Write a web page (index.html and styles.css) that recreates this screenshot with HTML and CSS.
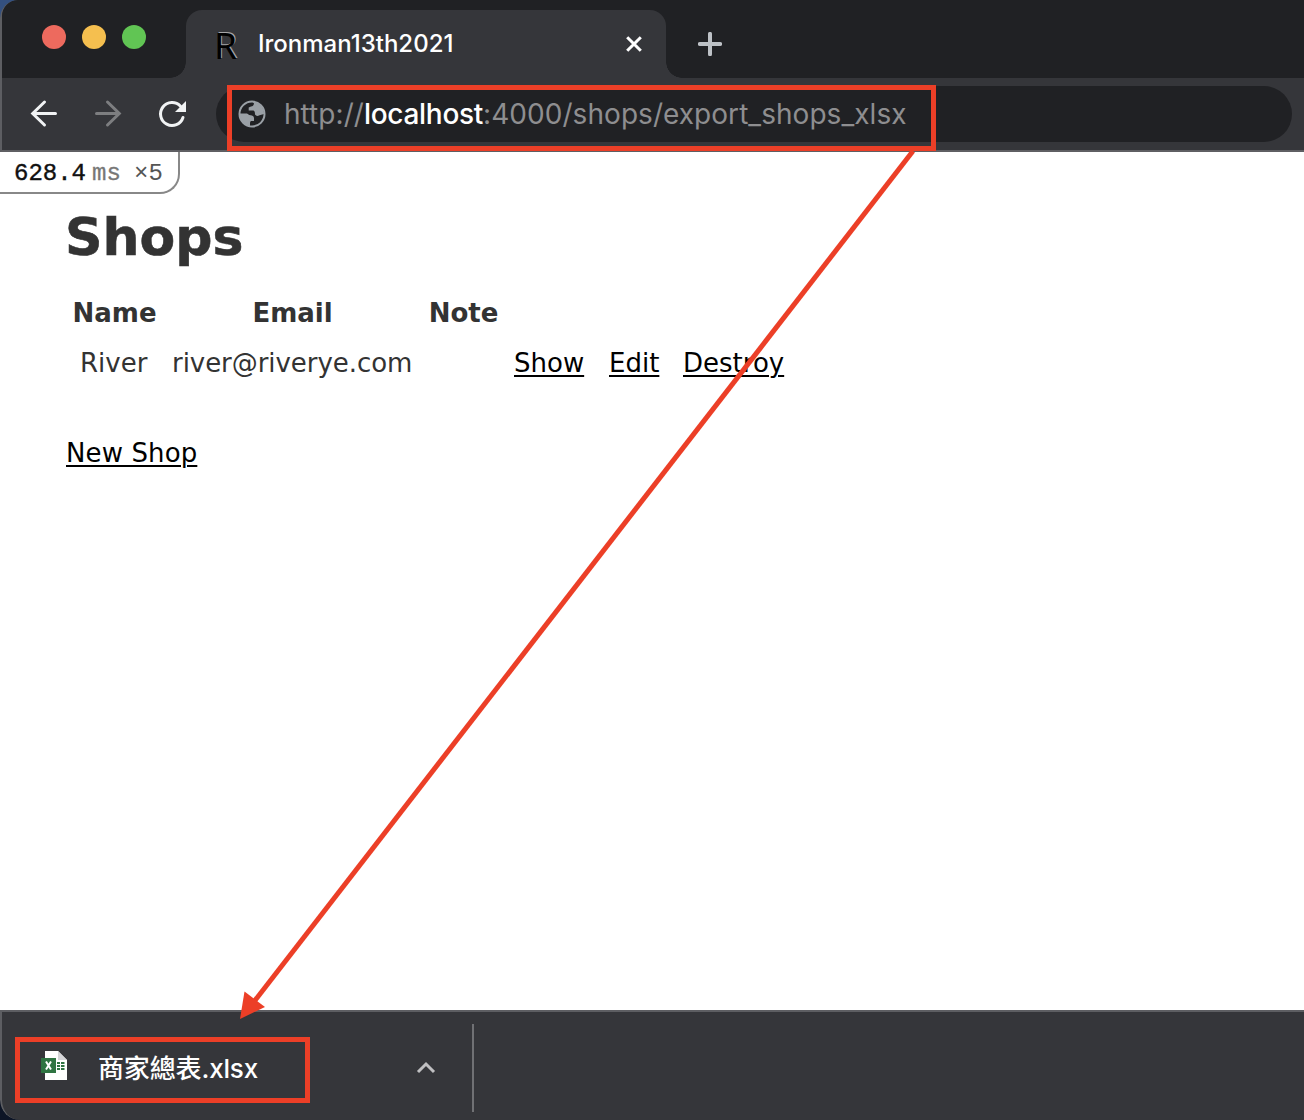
FILE: index.html
```html
<!DOCTYPE html>
<html lang="zh-Hant">
<head>
<meta charset="utf-8">
<title>Ironman13th2021</title>
<link rel="stylesheet" href="styles.css">
</head>
<body>
<div class="window">
  <header class="chrome">
    <div class="tabstrip">
      <div class="lights"><i class="light red"></i><i class="light yellow"></i><i class="light green"></i></div>
      <div class="tab">
        <span class="favicon">R</span>
        <span class="tab-title">Ironman13th2021</span>
        <svg class="close" width="20" height="20" viewBox="0 0 20 20"><path d="M3.2 3.2 16.8 16.8M16.8 3.2 3.2 16.8"/></svg>
      </div>
      <svg class="plus" width="24" height="24" viewBox="0 0 24 24"><path d="M12 1.8V22.2M1.8 12H22.2"/></svg>
    </div>
    <div class="toolbar">
      <svg class="nav" width="32" height="32" viewBox="0 0 32 32"><path d="M27.500 15.500H5M16.500 4 4.700 15.500 16.500 27"/></svg>
      <svg class="nav dim" width="32" height="32" viewBox="0 0 32 32"><path d="M4.500 15.500H27M15.500 4 27.300 15.500 15.500 27"/></svg>
      <svg class="nav reload" width="32" height="32" viewBox="0 0 32 32"><path d="M27 19.500A11.500 11.500 0 1 1 24.500 8.200"/><path class="head" d="M30 3V14H19z"/></svg>
      <div class="omnibox">
        <svg class="globe" width="28" height="28" viewBox="0 0 28 28"><circle cx="14" cy="14" r="12.500"/><path class="land" d="M14.500 1.500 16 3.500Q15.500 6.500 13 6.500L10.700 7.500V10.500H15.500Q17 11 17 14.500Q18.500 17 21.500 15.300L26 14A12.500 12.500 0 0 0 14.500 1.500zM1.500 13.500H9Q11 15.500 14 15.500 16.200 16 16 18.500V21H13Q12 21.500 12 23V26.300A12.500 12.500 0 0 1 1.500 13.500z"/></svg>
        <span class="url">http://<b>localhost</b>:4000/shops/export_shops_xlsx</span>
      </div>
    </div>
  </header>
  <main class="page">
    <div class="profiler"><span class="num">628.4</span><span class="unit">ms</span><span class="count">×5</span></div>
    <h1>Shops</h1>
    <table>
      <colgroup><col class="c1"><col class="c2"><col class="c3"><col class="c4"><col class="c5"><col class="c6"></colgroup>
      <thead><tr><th>Name</th><th>Email</th><th class="note">Note</th><th colspan="3"></th></tr></thead>
      <tbody><tr><td>River</td><td class="mail">river@riverye.com</td><td></td><td><a href="#">Show</a></td><td><a href="#">Edit</a></td><td><a href="#">Destroy</a></td></tr></tbody>
    </table>
    <a class="new" href="#">New Shop</a>
  </main>
  <footer class="shelf">
    <div class="download">
      <svg class="xls" width="28" height="32" viewBox="0 0 28 32">
        <path fill="#fff" d="M4 1H17L26 10V30H4z"/><path fill="#d5d6d8" d="M17 1V10H26z"/>
        <path fill="#2f7442" d="M16 12h3v2h-3zM20 12h3.500v2H20zM16 15h3v2h-3zM20 15h3.500v2H20zM16 18h3v2h-3zM20 18h3.500v2H20zM0 8H15V23H0z"/>
        <path class="x" d="M5 11.500 10 19.500M10 11.500 5 19.500"/>
      </svg>
      <span class="filename">商家總表.xlsx</span>
    </div>
    <svg class="chevron" width="20" height="14" viewBox="0 0 20 14"><path d="M2 12 10 4 18 12"/></svg>
    <div class="divider"></div>
  </footer>
</div>
<div class="mark mark-url"></div>
<div class="mark mark-file"></div>
<svg class="arrow" width="1304" height="1120" viewBox="0 0 1304 1120"><path class="shaft" d="M913 151 253 1003"/><path class="tip" d="M240 1019 244.500 991.500 265 1007z"/></svg>
</body>
</html>
```
FILE: styles.css
```css
* { box-sizing: border-box; }
body { margin: 0; width: 1304px; height: 1120px; overflow: hidden; position: relative; background: linear-gradient(#34507f 0, #34507f 40px, #0d1526 60px); }
svg { display: block; fill: none; stroke-linecap: butt; flex: none; }
.window { display: flex; flex-direction: column; height: 1120px; border-radius: 18px 0 0 20px; overflow: hidden; font-family: Inter, "Noto Sans CJK TC", sans-serif; }
.chrome { flex: none; height: 152px; background: #35363a; border-left: 2px solid #5d5e62; border-bottom: 2px solid #5f5f63; border-top-left-radius: 18px; }
.tabstrip { height: 78px; background: #202124; display: flex; align-items: flex-start; border-top-left-radius: 16px; }
.lights { display: flex; gap: 16px; padding: 25px 0 0 40px; width: 184px; }
.light { width: 24px; height: 24px; border-radius: 50%; }
.red { background: #ed6a5e; }
.yellow { background: #f5bf4f; }
.green { background: #61c554; }
.tab { position: relative; margin-top: 10px; width: 480px; height: 68px; background: #35363a; border-radius: 16px 16px 0 0; display: flex; align-items: center; padding-left: 28px; }
.tab::before, .tab::after { content: ""; position: absolute; bottom: 0; width: 16px; height: 16px; }
.tab::before { left: -16px; background: radial-gradient(circle at 0 0, #202124 15.500px, #35363a 16px); }
.tab::after { right: -16px; background: radial-gradient(circle at 100% 0, #202124 15.500px, #35363a 16px); }
.favicon { width: 44px; font: 37px/40px "Noto Sans", sans-serif; color: #000; text-shadow: 1px -1px 0 #a5a5a7; padding-top: 2px; }
.tab-title { width: 366px; font-size: 24px; font-weight: 450; color: #fff; line-height: 30px; }
.close path { stroke: #fff; stroke-width: 3; }
.plus { margin: 32px 0 0 32px; }
.plus path { stroke: #bdc1c6; stroke-width: 4; stroke-linecap: round; }
.toolbar { height: 72px; display: flex; align-items: center; padding-left: 26px; }
.nav { margin-right: 32px; stroke: #f1f3f4; stroke-width: 3; stroke-linecap: round; }
.dim { stroke: #7d7e80; }
.reload { margin-right: 28px; }
.head { fill: #f1f3f4; stroke: none; }
.omnibox { width: 1076px; height: 56px; border-radius: 28px; background: #202124; display: flex; align-items: center; padding-left: 22px; }
.globe circle { stroke: #9aa0a6; stroke-width: 2; }
.land { fill: #9aa0a6; }
.url { margin-left: 18px; font-size: 28px; letter-spacing: 0.045px; color: #8e8e90; white-space: nowrap; }
.url b { font-weight: 450; letter-spacing: -0.28px; color: #fff; }
.page { flex: 1; background: #fff; color: #333; font: 26px/36px "DejaVu Sans", sans-serif; }
.profiler { width: 180px; height: 42px; border: solid #888; border-width: 0 2px 2px 0; border-bottom-right-radius: 20px; font: 24px/43px "Liberation Mono", monospace; padding-left: 14px; display: flex; white-space: nowrap; }
.num { color: #111; width: 78px; -webkit-text-stroke: 0.4px #111; }
.unit { color: #777; width: 42px; -webkit-text-stroke: 0.3px #777; }
.count { color: #555; }
h1 { margin: 8px 0 0 65px; font-size: 52px; line-height: 70px; -webkit-text-stroke: 0.6px #333; }
table { table-layout: fixed; width: 733px; margin: 23px 0 0 66px; border-spacing: 4px 0; border-collapse: separate; white-space: nowrap; }
.c1 { width: 89px; } .c2 { width: 259px; } .c3 { width: 74px; } .c4 { width: 91px; } .c5 { width: 70px; }
th { padding: 0 0 10px; text-align: center; }
.note { padding-left: 1px; }
td { padding: 4px 0 0 10px; }
.mail { padding-left: 9px; letter-spacing: -0.05px; }
a { color: #000; text-decoration: underline; text-decoration-thickness: 2px; text-underline-offset: 3px; }
.new { display: inline-block; margin: 54px 0 0 66px; letter-spacing: 0.12px; }
.shelf { flex: none; height: 110px; background: #35363a; border-top: 2px solid #5d5e62; border-left: 2px solid #5d5e62; border-bottom-left-radius: 20px; display: flex; }
.download { width: 414px; padding: 38px 0 0 39px; display: flex; }
.x { stroke: #fff; stroke-width: 2; }
.filename { margin-left: 29px; font-size: 26px; font-weight: 450; letter-spacing: -0.15px; line-height: 38px; color: #fff; white-space: nowrap; }
.chevron { margin-top: 48px; }
.chevron path { stroke: #c0c0c2; stroke-width: 3; }
.divider { margin: 12px 0 0 36px; width: 2px; height: 88px; background: #707174; }
.mark { position: absolute; border: 5px solid #ec3f27; }
.mark-url { left: 227px; top: 85px; width: 709px; height: 66px; }
.mark-file { left: 15px; top: 1037px; width: 295px; height: 66px; }
.arrow { position: absolute; left: 0; top: 0; }
.shaft { stroke: #ec3f27; stroke-width: 5; }
.tip { fill: #ec3f27; }
```
